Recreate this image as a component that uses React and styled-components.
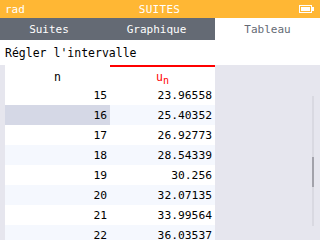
import React from "react";
import styled, { createGlobalStyle } from "styled-components";

const Global = createGlobalStyle`
  html, body { margin: 0; padding: 0; }
  body { width: 320px; height: 240px; overflow: hidden; background: #fff;
    font-family: "DejaVu Sans Mono", "Liberation Mono", monospace; }
`;

const Screen = styled.div`
  width: 320px;
  height: 240px;
  display: flex;
  flex-direction: column;
  overflow: hidden;
`;

const TopBar = styled.div`
  height: 18px;
  background: #ffb734;
  color: #fff;
  font-size: 11px;
  display: grid;
  grid-template-columns: 1fr auto 1fr;
  align-items: center;
  padding: 0 6px 0 5px;
`;

const TopLeft = styled.span``;
const TopTitle = styled.span`letter-spacing: 0.3px;`;
const TopRight = styled.div`
  display: flex;
  justify-content: flex-end;
  align-items: center;
`;

const Tabs = styled.div`
  height: 22px;
  background: #646a74;
  display: flex;
`;

const Tab = styled.div`
  flex: 0 0 ${(p) => p.$w}px;
  display: flex;
  align-items: center;
  justify-content: center;
  font-size: 11px;
  color: ${(p) => (p.$active ? "#646a74" : "#fff")};
  background: ${(p) => (p.$active ? "#fff" : "transparent")};
`;

const TitleRow = styled.div`
  height: 25px;
  display: flex;
  align-items: center;
  padding: 0 0 0 5px;
  font-size: 11.5px;
  color: #000;
  background: #fff;
`;

const Body = styled.div`
  flex: 1;
  display: flex;
  background: #e6e6ee;
  padding-left: 5px;
  min-height: 0;
`;

const Table = styled.div`
  width: 210px;
  display: grid;
  grid-template-columns: 105px 105px;
  grid-auto-rows: 20px;
  align-content: start;
`;

const HeadCell = styled.div`
  height: 21px;
  box-sizing: border-box;
  background: #fff;
  border-top: 2px solid ${(p) => (p.$accent ? "#ff0000" : "#fff")};
  display: flex;
  align-items: center;
  justify-content: center;
  font-size: 11.5px;
  color: ${(p) => (p.$accent ? "#ff0000" : "#000")};
`;

const Cell = styled.div`
  background: ${(p) => (p.$selected ? "#d5d8e6" : p.$alt ? "#f5f8fe" : "#fff")};
  display: flex;
  align-items: center;
  justify-content: flex-end;
  padding-right: 3px;
  font-size: 11.3px;
  color: #000;
`;

const Sub = styled.span`
  font-size: 10px;
  position: relative;
  top: 4px;
`;

const Side = styled.div`
  flex: 1;
  display: flex;
  justify-content: flex-end;
  padding: 31px 6px 0 0;
`;

const Track = styled.div`
  width: 2px;
  height: 130px;
  background: #d9d9e1;
`;

const Thumb = styled.div`
  width: 2px;
  height: 30px;
  margin-top: 61px;
  background: #a2a2aa;
`;

const Battery = () => (
  <svg width="15" height="8" viewBox="0 0 15 8">
    <rect x="0.5" y="0.5" width="12" height="7" fill="none" stroke="#fff" />
    <rect x="2" y="2" width="9" height="4" fill="#fff" />
    <rect x="13" y="2" width="2" height="4" fill="#fff" />
  </svg>
);

const rows = [
  ["15", "23.96558"],
  ["16", "25.40352"],
  ["17", "26.92773"],
  ["18", "28.54339"],
  ["19", "30.256"],
  ["20", "32.07135"],
  ["21", "33.99564"],
  ["22", "36.03537"],
];

export default function App() {
  return (
    <Screen>
      <Global />
      <TopBar>
        <TopLeft>rad</TopLeft>
        <TopTitle>SUITES</TopTitle>
        <TopRight>
          <Battery />
        </TopRight>
      </TopBar>
      <Tabs>
        <Tab $w={98}>Suites</Tab>
        <Tab $w={117}>Graphique</Tab>
        <Tab $w={105} $active>
          Tableau
        </Tab>
      </Tabs>
      <TitleRow>Régler l'intervalle</TitleRow>
      <Body>
        <Table>
          <HeadCell>n</HeadCell>
          <HeadCell $accent>
            u<Sub>n</Sub>
          </HeadCell>
          {rows.map(([n, u], i) => (
            <React.Fragment key={n}>
              <Cell $alt={i % 2 === 1} $selected={i === 1}>
                {n}
              </Cell>
              <Cell $alt={i % 2 === 1}>{u}</Cell>
            </React.Fragment>
          ))}
        </Table>
        <Side>
          <Track>
            <Thumb />
          </Track>
        </Side>
      </Body>
    </Screen>
  );
}
